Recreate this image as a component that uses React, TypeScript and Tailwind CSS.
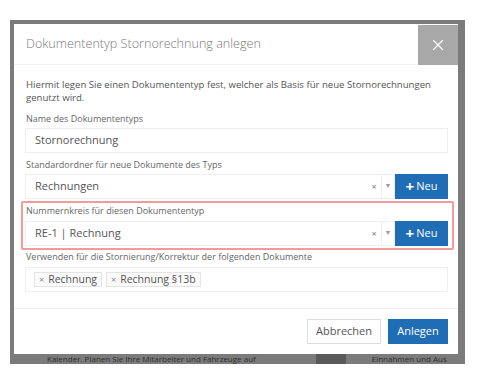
import { X } from "lucide-react";

const font = { fontFamily: '"Open Sans", "Liberation Sans", sans-serif' };

const Label = ({ text }: { text: string }) => (
  <div className="h-[13px] pl-px text-[9px] leading-[13px] text-[#666] whitespace-nowrap">
    {text}
  </div>
);

const SelectRow = ({ value }: { value: string }) => (
  <div className="flex h-[25px]">
    <div className="flex flex-1 items-center border border-[#eee] bg-white pl-[9px]">
      <span className="flex-1 text-[11px] text-[#555]">{value}</span>
      <span className="w-[14px] text-center text-[9px] font-bold text-[#999]">×</span>
      <span className="h-full w-px bg-[#eee]" />
      <span className="w-[12px] text-center text-[7px] text-[#999]">▼</span>
    </div>
    <button className="flex w-[53px] items-center justify-center gap-[2px] bg-[#1f6db5] text-[11px] text-white">
      <span className="text-[15px] font-bold leading-none">+</span>
      <span>Neu</span>
    </button>
  </div>
);

const Tag = ({ text }: { text: string }) => (
  <span className="flex h-[15px] items-center gap-[4px] border border-[#e4e4e4] bg-[#fafafa] px-[4px] text-[10.5px] text-[#555]">
    <span className="text-[9px] text-[#888]">×</span>
    {text}
  </span>
);

export default function App() {
  return (
    <div className="relative h-[373px] w-[478px] overflow-hidden bg-white pl-[10px] pt-[20px]" style={font}>
      <div className="w-[455px] border-l-4 border-r-[7px] border-t-4 border-[#7b7b7b]">
        <div className="bg-white">
          {/* header */}
          <div className="flex h-[41px] items-center border-b border-[#f0f0f0]">
            <h1 className="flex-1 pl-[12px] text-[12.6px] font-light text-[#7a7a7a]">
              Dokumententyp Stornorechnung anlegen
            </h1>
            <button className="mt-px flex h-[40px] w-[40px] items-center justify-center self-start bg-[#a8a8a8]">
              <X size={18} strokeWidth={1.6} color="#fff" />
            </button>
          </div>

          {/* body */}
          <div className="pb-[16px] pl-[11px] pr-[10px] pt-[13px]">
            <p className="pl-px text-[9.6px] leading-[13px] text-[#555]">
              Hiermit legen Sie einen Dokumententyp fest, welcher als Basis für neue Stornorechnungen
              <br />
              genutzt wird.
            </p>
            <div className="mt-[8px]">
              <Label text="Name des Dokumententyps" />
              <div className="mt-[3px] flex h-[25px] items-center border border-[#eee] pl-[9px] text-[11px] text-[#555]">
                Stornorechnung
              </div>
            </div>
            <div className="mt-[5px]">
              <Label text="Standardordner für neue Dokumente des Typs" />
              <div className="mt-[3px]">
                <SelectRow value="Rechnungen" />
              </div>
            </div>
            {/* highlighted group */}
            <div className="-ml-[4px] -mr-[6px] mt-[2px] rounded-[2px] border-2 border-solid border-[#f29b9b] pb-[2px] pl-[2px] pr-[4px] pt-[1px]">
              <Label text="Nummernkreis für diesen Dokumententyp" />
              <div className="mt-[4px]">
                <SelectRow value="RE-1 | Rechnung" />
              </div>
            </div>
            <div>
              <Label text="Verwenden für die Stornierung/Korrektur der folgenden Dokumente" />
              <div className="mt-[4px] flex h-[25px] items-center gap-[4px] border border-[#eee] pl-[8px]">
                <Tag text="Rechnung" />
                <Tag text="Rechnung §13b" />
              </div>
            </div>
          </div>

          {/* footer */}
          <div className="flex justify-end gap-[7px] border-t border-[#eee] pb-[10px] pr-[10px] pt-[10px]">
            <button className="h-[25px] w-[74px] border border-[#ddd] bg-white text-[11px] text-[#555]">
              Abbrechen
            </button>
            <button className="h-[25px] w-[60px] bg-[#1f6db5] text-[11px] text-white">Anlegen</button>
          </div>
        </div>

        {/* page text peeking under the frame */}
        <div className="flex h-[10px] items-center bg-[#7b7b7b] text-[8px] leading-[10px] text-[#2e2e2e]">
          <span className="pl-[33px] whitespace-nowrap">Kalender. Planen Sie Ihre Mitarbeiter und Fahrzeuge auf</span>
          <span className="ml-[60px] h-full w-[30px] bg-[#5a5a5a]" />
          <span className="ml-[26px] whitespace-nowrap">Einnahmen und Aus</span>
        </div>
      </div>
    </div>
  );
}
